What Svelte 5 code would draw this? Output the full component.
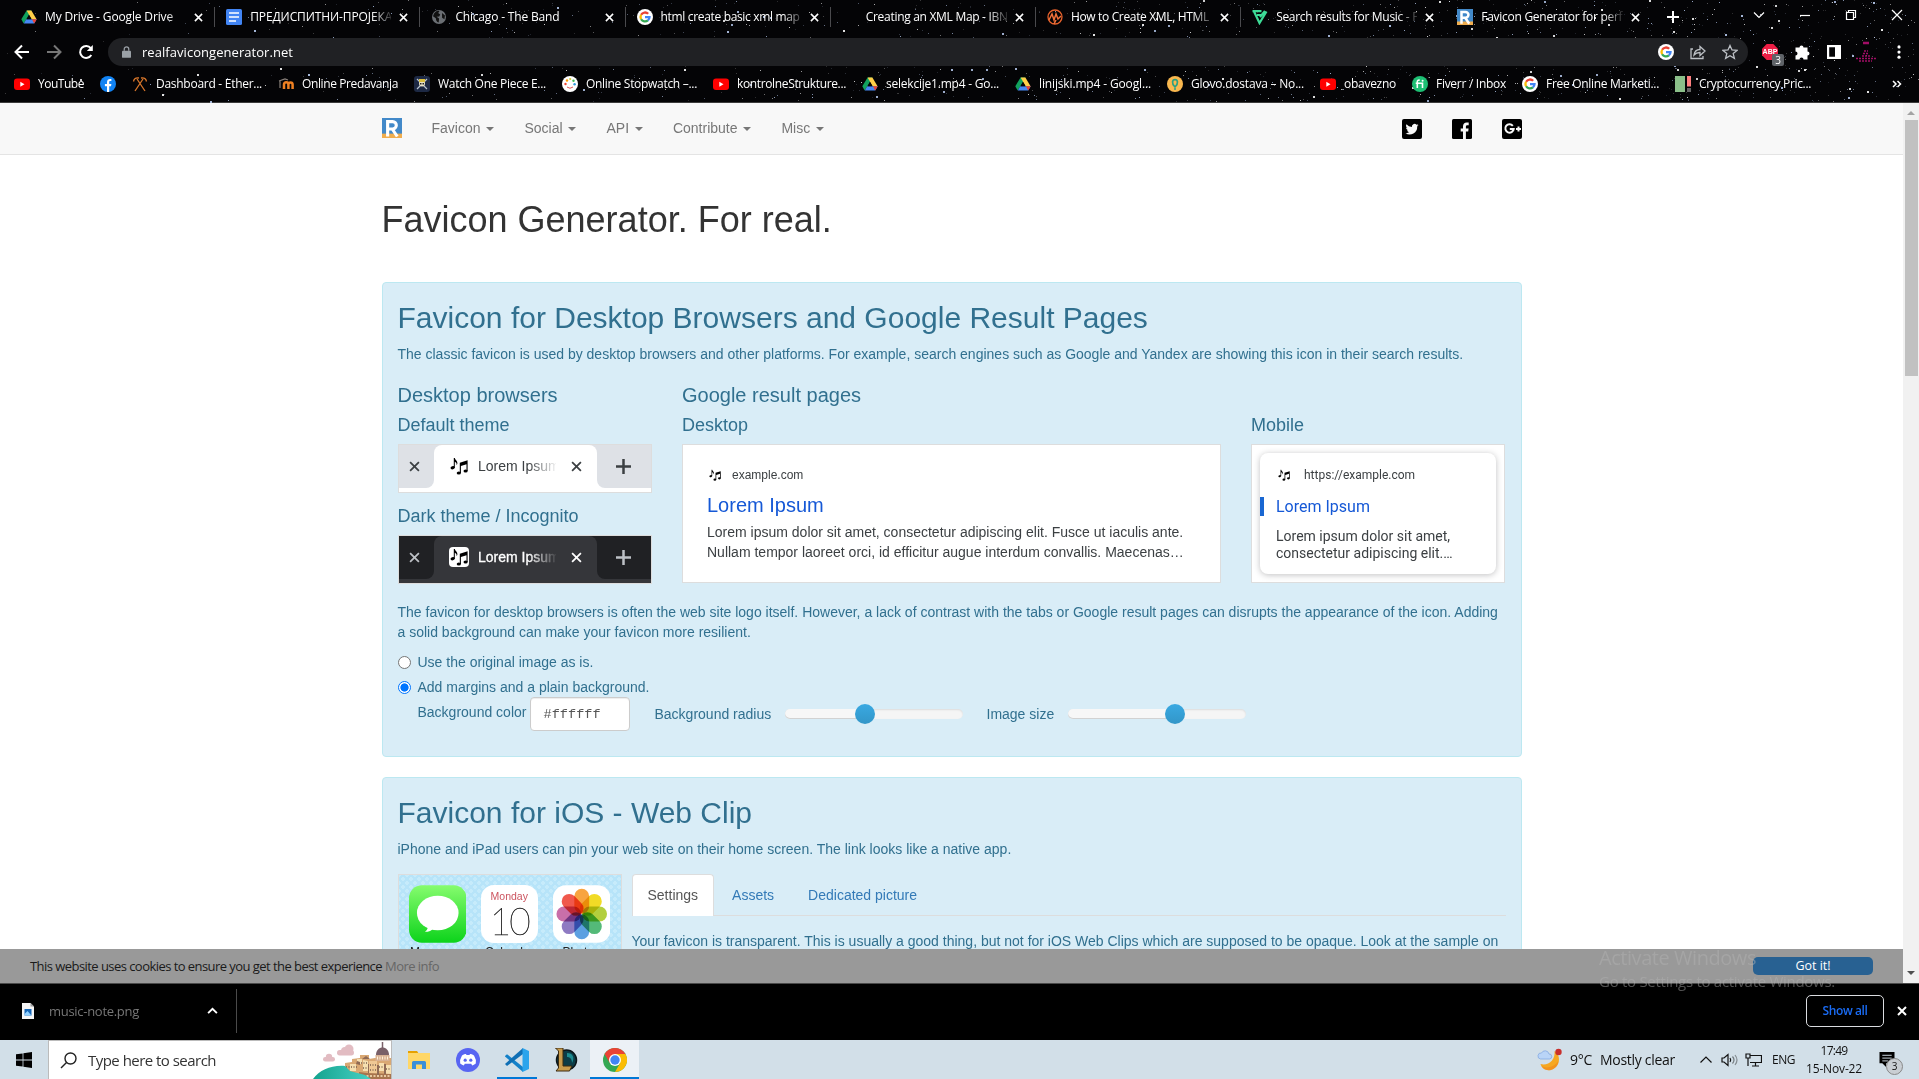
<script>
  const tabs = [
    { icon: 'drive', title: 'My Drive - Google Drive', w: 128 },
    { icon: 'docs', title: 'ПРЕДИСПИТНИ-ПРОЈЕКА', w: 142 },
    { icon: 'globe', title: 'Chicago - The Band', w: 104 },
    { icon: 'google', title: 'html create basic xml map', w: 139 },
    { icon: '', title: 'Creating an XML Map - IBN', w: 142 },
    { icon: 'mark', title: 'How to Create XML, HTML', w: 138 },
    { icon: 'fy', title: 'Search results for Music - F', w: 142 },
    { icon: 'rfg', title: 'Favicon Generator for perf', w: 141 }
  ];
  const bookmarks = [
    ['youtube', 'YouTube', 46],
    ['facebook', '', 0],
    ['hammers', 'Dashboard - Ether...', 106],
    ['moodle', 'Online Predavanja', 96],
    ['pirate', 'Watch One Piece E...', 108],
    ['dots', 'Online Stopwatch –...', 111],
    ['youtube', 'kontrolneStrukture...', 109],
    ['drive', 'selekcije1.mp4 - Go...', 113],
    ['drive', 'linijski.mp4 - Googl...', 112],
    ['glovo', 'Glovo.dostava – No...', 113],
    ['youtube', 'obavezno', 52],
    ['fiverr', 'Fiverr / Inbox', 70],
    ['google', 'Free Online Marketi...', 113],
    ['crypto', 'Cryptocurrency Pric...', 112]
  ];
  const menu = ['Favicon', 'Social', 'API', 'Contribute', 'Misc'];
  const petals = ['#f7941d', '#efd500', '#a6c71a', '#36ae60', '#3f8fdc', '#7a63b8', '#c0559a', '#ee3a2c'];

  // Seeded generator so the star field is the same on every load.
  let seed = 7;
  const rnd = () => (seed = (seed * 16807) % 2147483647) / 2147483647;
  const stars = Array.from({ length: 1500 }, () => {
    const x = Math.floor(1919 * Math.pow(rnd(), 0.6));
    const y = Math.floor(102 * rnd());
    const bright = rnd();
    return { x, y, o: 0.15 + 0.75 * bright * bright, s: bright > 0.93 ? 2 : 1, c: rnd() > 0.5 ? '#b9cdf2' : '#fff' };
  });

  // Spreads a label over a given width through its letter spacing.
  function fit(node, width) {
    node.style.display = 'inline-block';
    node.style.whiteSpace = 'nowrap';
    const natural = node.getBoundingClientRect().width;
    const n = node.textContent.trim().length;
    if (n && width) {
      node.style.letterSpacing = (width - natural) / n + 'px';
      node.style.width = width + 'px';
    }
  }
</script>

{#snippet icon(name)}
  <svg class="ico" viewBox="0 0 16 16">
    {#if name === 'drive'}
      <path fill="#11a15d" d="M5.6 1.5h4.8L5.2 10.4 2.7 14.4 .3 10.2z" />
      <path fill="#ffcf48" d="M5.6 1.5h4.8l5.3 8.9h-4.9z" />
      <path fill="#4688f4" d="M5.2 10.2h10.5l-2.5 4.3H2.8z" />
      <path fill="#ea4335" d="M10.9 10.2h4.8l-2.5 4.3z" />
      <path fill="#050508" d="M8 6.1l2.4 4.1H5.6z" />
    {:else if name === 'docs'}
      <rect width="16" height="16" rx="1.5" fill="#4285f4" />
      <path stroke="#fff" stroke-width="1.6" d="M3 4h10M3 8h10M3 12h7" />
    {:else if name === 'globe'}
      <circle cx="8" cy="8" r="7" fill="#6b6f74" />
      <path fill="#111" d="M3 4.5c2-2.6 4-3 5.5-2.6L7.2 4l2 1.4-1 2-2.6.4 2.5 1.8-.4 3.9C5 12.500 5 10.500 4.800 9.200L2 7.200z M11 4l3 2.400-.6 3.800-2.300-1.400z" />
    {:else if name === 'google'}
      <circle cx="8" cy="8" r="8" fill="#fff" />
      <g fill="none" stroke-width="2.3">
        <path stroke="#ea4335" d="M4.100 5.800A4.500 4.500 0 0 1 11.200 4.800" />
        <path stroke="#fbbc05" d="M4.100 5.800A4.500 4.500 0 0 0 4.100 10.200" />
        <path stroke="#34a853" d="M4.100 10.200A4.500 4.500 0 0 0 10.900 11.400" />
        <path stroke="#4285f4" d="M8 8.200h4.500A4.500 4.500 0 0 1 10.900 11.400" />
      </g>
    {:else if name === 'mark'}
      <circle cx="8" cy="8" r="7" fill="none" stroke="#e8622c" stroke-width="1.300" />
      <path fill="none" stroke="#f0713a" stroke-width="1.500" d="M2 11l3-6 2 6 2-6 2 5 3-3M7 15l2-4" />
    {:else if name === 'fy'}
      <path fill="none" stroke="#3ddc97" stroke-width="2.200" d="M.5 2.200h9M2 2.500l5.500 11.500L14.500 2.500M5 6h5M8 8l5-6" />
    {:else if name === 'rfg'}
      <rect width="16" height="16" fill="#4289c9" /><rect y="12.500" width="16" height="3.500" fill="#f0ad4e" />
      <path fill="none" stroke="#fff" stroke-width="2.500" d="M4.500 14.800V2.900h4a2.900 2.900 0 0 1 0 5.900h-4M8.200 8.800l4 6" />
    {:else if name === 'youtube'}
      <rect y="2.500" width="16" height="11.500" rx="3" fill="#f00" /><path fill="#fff" d="M6.300 5.800v5l4.200-2.500z" />
    {:else if name === 'facebook'}
      <circle cx="8" cy="8" r="8" fill="#1183f3" />
      <path fill="#fff" d="M7 16v-5.700H4.900V8H7V6.200c0-2.200 1.300-3.300 3.200-3.300.7 0 1.200.1 1.200.1v2h-1c-1 0-1.200.6-1.200 1.200V8h2.200l-.4 2.300H9.200V16z" />
    {:else if name === 'hammers'}
      <path fill="none" stroke="#d9772b" stroke-width="1.300" d="M3 15L11 3M13 15L5 3M1.500 5.500C2 3 4 1.500 7 2M14.500 5.500C14 3 12 1.500 9 2" />
    {:else if name === 'moodle'}
      <path fill="none" stroke="#ee8022" stroke-width="2.500" d="M6 13V8.500a2.200 2.200 0 0 1 4.400 0V13M10.400 8.500a2.100 2.100 0 0 1 4.200 0V13" />
      <path stroke="#8a817a" stroke-width="1.200" fill="none" d="M1 5l6-2 3 1M2 5v7" />
    {:else if name === 'pirate'}
      <rect width="16" height="16" rx="3" fill="#1d2944" />
      <path stroke="#b9c3cf" stroke-width="1.200" d="M3 3l10 10M13 3L3 13" /><circle cx="8" cy="7.500" r="3" fill="#e6e2c8" />
      <path fill="#d8bd3d" d="M5 3h6v3H5z" /><path fill="#222" d="M6 7h1.500v1.500H6zM8.500 7H10v1.500H8.500z" />
    {:else if name === 'dots'}
      <circle cx="8" cy="8" r="8" fill="#fff" />
      <circle cx="3.500" cy="8" r="1.200" fill="#e43" /><circle cx="5" cy="4.500" r="1.200" fill="#f90" />
      <circle cx="8.200" cy="3" r="1.100" fill="#cc3" /><circle cx="11.500" cy="4.700" r="1.200" fill="#4b5" />
      <circle cx="12.600" cy="8.300" r="1.200" fill="#39d" /><path fill="none" stroke="#d55" d="M5 11q3 2.500 6 0" />
    {:else if name === 'glovo'}
      <circle cx="8" cy="8" r="8" fill="#f9b84f" />
      <path fill="none" stroke="#2aa083" stroke-width="1.700" d="M8 11C4 7 5.500 3.600 8 3.600S12 7 8 11z" /><circle cx="8" cy="13" r="1" fill="#2aa083" />
    {:else if name === 'fiverr'}
      <circle cx="8" cy="8" r="8" fill="#1dbf73" />
      <path fill="none" stroke="#fff" stroke-width="1.600" d="M5.300 12V6c0-1.500.8-2 2.400-1.800M3.700 7.300h6.800V12" /><circle cx="10.600" cy="4.700" r="1" fill="#fff" />
    {:else if name === 'crypto'}
      <rect width="10" height="16" fill="#8bc08a" /><rect x="12" width="4" height="10.500" fill="#ff8080" /><rect x="12" y="12" width="4" height="4" fill="#666" />
    {/if}
  </svg>
{/snippet}

{#snippet notes()}
  <svg class="notes" viewBox="0 0 18 18">
    <g fill="currentColor">
      <ellipse cx="2.600" cy="10.800" rx="2.100" ry="1.600" transform="rotate(-15 2.600 10.800)" />
      <path d="M3.800 1h1c.2 2 2.600 2.500 2.600 5 0 1-.4 1.600-.9 2.100.5-2-.6-2.900-1.700-3.400V11h-1z" />
      <ellipse cx="8.800" cy="16" rx="2.100" ry="1.600" /><ellipse cx="15.600" cy="14" rx="2.100" ry="1.600" />
      <path d="M9.800 5.700L17.600 3.200V14h-1.100V7.200l-5.600 1.700V16H9.800z" />
    </g>
  </svg>
{/snippet}

{#snippet cross()}
  <svg class="cross" viewBox="0 0 10 10"><path d="M1 1l8 8M9 1L1 9" /></svg>
{/snippet}

<div class="screen">
  <header class="chrome">
    <svg class="stars" viewBox="0 0 1919 103">
      {#each stars as s}<rect x={s.x} y={s.y} width={s.s} height={s.s} fill={s.c} opacity={s.o} />{/each}
    </svg>
    <div class="tabs">
      <div class="strip">
        {#each tabs as t, i}
          <div class="tab" class:last={i > 5}>
            {@render icon(t.icon)}
            <span class="title"><span use:fit={t.w}>{t.title}</span></span>
            {@render cross()}
          </div>
        {/each}
      </div>
      <svg class="plus" viewBox="0 0 12 12"><path d="M6 0v12M0 6h12" /></svg>
      <div class="win">
        <svg viewBox="0 0 12 12"><path d="M1 3.500l5 5 5-5" /></svg>
        <svg viewBox="0 0 12 12"><path d="M1 6.500h10" /></svg>
        <svg viewBox="0 0 12 12"><path d="M1.500 3.500h7v7h-7zM3.500 3.500v-2h7v7h-2" /></svg>
        <svg viewBox="0 0 12 12"><path d="M1 1l10 10M11 1L1 11" /></svg>
      </div>
    </div>
    <div class="toolbar">
      <svg class="nav" viewBox="0 0 16 16"><path d="M15 8H2M8 1.500L1.500 8 8 14.500" /></svg>
      <svg class="nav dim" viewBox="0 0 16 16"><path d="M1 8h13M8 1.500L14.500 8 8 14.500" /></svg>
      <svg class="nav" viewBox="0 0 16 16"><path d="M13.300 11A6 6 0 1 1 12.800 4.200" /><path class="solid" d="M14.800 1v6H8.800z" /></svg>
      <div class="omni">
        <svg class="lock" viewBox="0 0 10 13"><path fill="#9aa0a6" d="M1 5h8a1 1 0 0 1 1 1v6a1 1 0 0 1-1 1H1a1 1 0 0 1-1-1V6a1 1 0 0 1 1-1z" /><path fill="none" stroke="#9aa0a6" stroke-width="1.400" d="M2.500 5V3.200a2.500 2.500 0 0 1 5 0V5" /></svg>
        <span class="url"><span use:fit={151}>realfavicongenerator.net</span></span>
        <span class="omni-icons">
          {@render icon('google')}
          <svg class="line" viewBox="0 0 16 16"><path d="M3 5H1v9.500h12V12M4 11c.5-3.500 2.500-5.500 6-5.500V2.500l5 4.500-5 4.500V8.500C7.500 8.500 5.500 9.300 4 11z" /></svg>
          <svg class="line" viewBox="0 0 16 16"><path d="M8 1.500l2 4.500 5 .4-3.800 3.200 1.200 4.800L8 11.800l-4.400 2.600 1.200-4.800L1 6.400 6 6z" /></svg>
        </span>
      </div>
      <div class="ext">
        <span class="abp">
          <svg class="ico" viewBox="0 0 16 16"><path fill="#ed1e45" d="M4.700 0h6.600L16 4.700v6.600L11.300 16H4.700L0 11.300V4.700z" /></svg>
          <span class="abp-text">ABP</span><span class="badge">3</span>
        </span>
        <svg class="ico" viewBox="0 0 16 16"><path fill="#fff" d="M1.500 3.500h4a2 2 0 0 1 4 0h4v4a2 2 0 0 1 0 4v4h-4a2 2 0 0 0-4 0h-4v-4a2 2 0 0 0 0-4z" /></svg>
        <svg class="ico" viewBox="0 0 16 16"><path fill="#fff" fill-rule="evenodd" d="M1 1h14v14H1zM3.200 3.200v9.600h5.800V3.200z" /></svg>
        <svg class="avatar" viewBox="0 0 20 22"><g stroke="#c9107e" stroke-width="1.500" opacity=".8"><path stroke-width="2.500" d="M7 2h6" /><path stroke-dasharray="2 1" d="M8 10h4M7 12.500h6M6 15h8M0 17.500h20M3 20h13" /></g></svg>
        <svg class="more" viewBox="0 0 4 16"><circle cx="2" cy="2" r="1.700" /><circle cx="2" cy="7.500" r="1.700" /><circle cx="2" cy="13" r="1.700" /></svg>
      </div>
    </div>
    <div class="bookmarks">
      {#each bookmarks as [ic, label, w]}
        <div class="bm">{@render icon(ic)}{#if label}<span use:fit={w}>{label}</span>{/if}</div>
      {/each}
      <svg class="chev" viewBox="0 0 10 8"><path d="M1 1l3 3-3 3M5.500 1l3 3-3 3" /></svg>
    </div>
  </header>

  <div class="view">
    <div class="page">
      <nav class="navbar">
        <div class="container bar">
          <span class="logo">{@render icon('rfg')}</span>
          <div class="menu">
            {#each menu as m}<a href="#top">{m} <i class="caret"></i></a>{/each}
          </div>
          <div class="social">
            <svg viewBox="0 0 20 20"><rect width="20" height="20" rx="2" /><path fill="#f8f8f8" d="M16.500 6a5 5 0 0 1-1.500.4A2.700 2.700 0 0 0 16.200 5a5 5 0 0 1-1.700.7 2.700 2.700 0 0 0-4.600 2.400A7.500 7.500 0 0 1 4.500 5.300a2.700 2.700 0 0 0 .8 3.600 2.600 2.600 0 0 1-1.200-.4c0 1.300.9 2.400 2.100 2.700a2.700 2.700 0 0 1-1.200 0c.3 1.100 1.300 1.900 2.500 1.900A5.400 5.400 0 0 1 3.500 14.200 7.600 7.600 0 0 0 15.200 7.400 5.400 5.400 0 0 0 16.500 6z" /></svg>
            <svg viewBox="0 0 20 20"><rect width="20" height="20" rx="1.500" /><path fill="#f8f8f8" d="M11 20v-7.500H8.700v-3H11V7.300C11 4.900 12.500 3.500 14.700 3.500h2v2.800h-1.300c-1.200 0-1.500.6-1.500 1.500v1.700h2.700l-.4 3h-2.300V20z" /></svg>
            <svg viewBox="0 0 20 20"><rect width="20" height="20" rx="2" /><path fill="none" stroke="#f8f8f8" stroke-width="2" d="M10.800 6.800A4.200 4.200 0 1 0 11.700 10H7.800M14 10h5M16.500 7.500v5" /></svg>
          </div>
        </div>
      </nav>

      <main class="container">
        <h1>Favicon Generator. For real.</h1>

        <section class="panel first">
          <h2>Favicon for Desktop Browsers and Google Result Pages</h2>
          <p>The classic favicon is used by desktop browsers and other platforms. For example, search engines such as Google and Yandex are showing this icon in their search results.</p>
          <div class="cols">
            <div>
              <h3>Desktop browsers</h3>
              <h4>Default theme</h4>
              <div class="preview light">
                <div class="edge left">{@render cross()}</div>
                <div class="ptab">{@render notes()}<span>Lorem Ipsum</span>{@render cross()}</div>
                <div class="edge right"><svg class="plus" viewBox="0 0 12 12"><path d="M6 0v12M0 6h12" /></svg></div>
              </div>
              <h4 class="second">Dark theme / Incognito</h4>
              <div class="preview dark">
                <div class="edge left">{@render cross()}</div>
                <div class="ptab">{@render notes()}<span>Lorem Ipsum</span>{@render cross()}</div>
                <div class="edge right"><svg class="plus" viewBox="0 0 12 12"><path d="M6 0v12M0 6h12" /></svg></div>
              </div>
            </div>
            <div>
              <h3>Google result pages</h3>
              <h4>Desktop</h4>
              <div class="result">
                <div class="site">{@render notes()}example.com</div>
                <div class="rtitle">Lorem Ipsum</div>
                <div class="rtext">Lorem ipsum dolor sit amet, consectetur adipiscing elit. Fusce ut iaculis ante.<br />Nullam tempor laoreet orci, id efficitur augue interdum convallis. Maecenas…</div>
              </div>
            </div>
            <div>
              <h3>&nbsp;</h3>
              <h4>Mobile</h4>
              <div class="result mobile">
                <div class="card">
                  <div class="site">{@render notes()}https://example.com</div>
                  <div class="rtitle">Lorem Ipsum</div>
                  <div class="rtext">Lorem ipsum dolor sit amet,<br />consectetur adipiscing elit.…</div>
                </div>
              </div>
            </div>
          </div>
          <p>The favicon for desktop browsers is often the web site logo itself. However, a lack of contrast with the tabs or Google result pages can disrupts the appearance of the icon. Adding a solid background can make your favicon more resilient.</p>
          <div class="radio"><i></i>Use the original image as is.</div>
          <div class="radio on"><i></i>Add margins and a plain background.</div>
          <div class="options">
            <span class="lbl">Background color</span><span class="field">#ffffff</span>
            <span class="radius">Background radius</span><span class="slider"><b class="fill a"></b><b class="knob"></b></span>
            <span class="size">Image size</span><span class="slider"><b class="fill b"></b><b class="knob"></b></span>
          </div>
        </section>

        <section class="panel ios">
          <h2>Favicon for iOS - Web Clip</h2>
          <p>iPhone and iPad users can pin your web site on their home screen. The link looks like a native app.</p>
          <div class="clip">
            <div class="phone">
              <div class="app">
                <svg viewBox="0 0 58 58">
                  <defs><linearGradient id="msg" x2="0" y2="1"><stop offset="0" stop-color="#86fc6e" /><stop offset="1" stop-color="#0cd31b" /></linearGradient></defs>
                  <rect width="58" height="58" rx="13" fill="url(#msg)" />
                  <ellipse cx="29" cy="28" rx="21" ry="17.500" fill="#fff" /><path fill="#fff" d="M19 41c0 3-1 4.500-3 6 4 0 7-1.500 9-4z" />
                </svg>
                <span>Messages</span>
              </div>
              <div class="app">
                <div class="cal"><small>Monday</small><b>10</b></div>
                <span>Calendar</span>
              </div>
              <div class="app">
                <svg viewBox="0 0 58 58">
                  <rect width="58" height="58" rx="13" fill="#fff" />
                  <g class="petals">
                    {#each petals as c, i}<rect x="21.500" y="3.500" width="15" height="25" rx="7.500" fill={c} opacity=".85" transform={`rotate(${i * 45} 29 29)`} />{/each}
                  </g>
                </svg>
                <span>Photos</span>
              </div>
            </div>
            <div class="settings">
              <div class="navtabs"><span class="active">Settings</span><span>Assets</span><span>Dedicated picture</span></div>
              <p>Your favicon is transparent. This is usually a good thing, but not for iOS Web Clips which are supposed to be opaque. Look at the sample on</p>
            </div>
          </div>
        </section>
      </main>
    </div>
    <div class="scroll"><i class="up"></i><b></b><i class="down"></i></div>
    <div class="cookie">
      <span use:fit={352}>This website uses cookies to ensure you get the best experience</span>
      <a href="#info" use:fit={54}>More info</a>
      <button>Got it!</button>
    </div>
  </div>

  <div class="downloads">
    <svg class="file" viewBox="0 0 12 16"><path fill="#f5f5f5" d="M0 0h8.500L12 3.500V16H0z" /><path fill="#999" d="M8.500 0v3.500H12z" /><rect x="2.500" y="6" width="7" height="6.500" fill="#1567b8" /><path fill="#8fd0ff" d="M2.500 11l3-3 4 4.500h-7z" /></svg>
    <span class="fname"><span use:fit={90}>music-note.png</span></span>
    <svg class="up" viewBox="0 0 10 7"><path d="M1 5.500l4-4 4 4" /></svg>
    <i class="sep"></i>
    <button><span use:fit={45}>Show all</span></button>
    {@render cross()}
  </div>

  <footer class="taskbar">
    <div class="start"><svg viewBox="0 0 16 16"><path d="M0 2.300L6.600 1.400v6.200H0zM7.400 1.300L16 0v7.600H7.400zM0 8.400h6.600v6.200L0 13.700zM7.400 8.400H16V16l-8.600-1.200z" /></svg></div>
    <div class="search">
      <svg class="lens" viewBox="0 0 17 17"><circle cx="10.500" cy="6.500" r="5.500" /><path d="M6.500 10.500L1 16" /></svg>
      <span use:fit={128}>Type here to search</span>
      <svg class="city" viewBox="0 0 78 38">
        <defs><linearGradient id="sea" x2="1"><stop offset="0" stop-color="#14a38e" /><stop offset="1" stop-color="#45d0c4" /></linearGradient></defs>
        <g fill="#e2bcc2"><circle cx="32" cy="10" r="4" /><circle cx="36" cy="8" r="4.500" /><rect x="24" y="9" width="17" height="5.500" rx="2.700" /><circle cx="16" cy="16" r="3.200" /><rect x="10" y="16" width="12" height="4.500" rx="2.200" /></g>
        <path fill="#d9a873" d="M32 31v-9l7-1v-3l8-1v-3h9v4l6-1h16v21H50z" />
        <path fill="#f6dfb0" d="M37 23h6v7h-6zM44 18h5v5h-5zM50 19l5 1v10h-5zM66 22h5v8h-5zM73 24h5v9h-5z" />
        <path fill="#efc894" d="M56 20h8v14h-8z" />
        <path fill="#a8744d" d="M46 31l8 1 24 1v5H46z" />
        <path fill="#8f6a55" d="M43 23l1-3 3 1v3zM49 18l4-3 4 3zM64 24h2v10h-2zM71 23h2v10h-2zM55 23h1v9h-1z" />
        <path stroke="#7b604f" stroke-dasharray="1 1.500" stroke-width="1.500" d="M33 26h12M48 22h7M57 24h6M57 29h6M66 26h5M73 28h5M50 27h5" />
        <path stroke="#fbe6be" stroke-dasharray="2 1.500" stroke-width="1.500" d="M50 35h28" />
        <path fill="url(#sea)" d="M0 38c7-9 18-14 32-13l5 5 15 4 6 4z" />
        <path fill="#796068" d="M63 14c0-10 13-10 13 0z" /><path fill="#d8b193" d="M62.500 14h14v6h-14z" />
        <path stroke="#796068" stroke-width="1.500" d="M69.500 1v6" /><path stroke="#fff0d6" d="M64 17h11" stroke-dasharray="1 1.500" stroke-width="3" />
      </svg>
    </div>
    <div class="task"><svg viewBox="0 0 24 24"><path fill="#e6a100" d="M1 3h9l2 3H1z" /><path fill="#ffd767" d="M1 5h22v16H1z" /><path fill="#3a8fd8" d="M5 21v-6.500q0-1.500 1.500-1.500h11q1.500 0 1.500 1.500V21h-4v-4.500H9V21z" /></svg></div>
    <div class="task"><svg viewBox="0 0 24 24"><circle cx="12" cy="12" r="12" fill="#5865f2" /><path fill="#fff" d="M6 7.500q2.500-1.500 4-1.400l.5.900h3l.5-.9q1.500-.1 4 1.400Q20.500 11.500 19.800 15.600q-2 1.500-3.600 1.800l-1-1.600H8.800l-1 1.600Q6.200 17.100 4.200 15.600 3.500 11.500 6 7.500z" /><circle cx="9.200" cy="12.200" r="1.600" fill="#5865f2" /><circle cx="14.800" cy="12.200" r="1.600" fill="#5865f2" /></svg></div>
    <div class="task open"><svg viewBox="0 0 24 24"><path fill="#1481c9" d="M0 8l2-1.800L18 19v5L0 8.500z" /><path fill="#0f6fb5" d="M0 16L18 0v6L2 18z" /><path fill="#2ba4ec" d="M17.500 0L24 3v18l-6.500 3z" /></svg></div>
    <div class="task"><svg viewBox="0 0 24 24"><circle cx="12.500" cy="12" r="10" fill="#0c3c46" stroke="#0b1418" stroke-width="1.500" /><path fill="#1d8b90" d="M13 5c6 0 8 5 5 10 0-4-2-6-5-6z" /><path fill="#c89b4b" stroke="#3a2a10" stroke-width="1" d="M1.500 0H9v18h9l-2.500 5H2l2.500-3V3z" /></svg></div>
    <div class="task open current"><svg viewBox="0 0 24 24"><circle cx="12" cy="12" r="12" fill="#34a853" /><path fill="#ea4335" d="M1.600 6A12 12 0 0 1 22.400 6H12l-5.200 9z" /><path fill="#fbbc04" d="M22.400 6A12 12 0 0 1 12 24l5.200-9L12 6z" /><circle cx="12" cy="12" r="6" fill="#fff" /><circle cx="12" cy="12" r="4.700" fill="#4285f4" /></svg></div>
    <div class="tray">
      <svg class="weather" viewBox="0 0 24 24"><path fill="#f6a821" d="M17 3c7 4 6 17-4 19-5 1-9-2-10-6 8 2 15-4 14-13z" /><path fill="#ef7d1a" opacity=".5" d="M4 18c5 3 13 1 17-5-1 9-12 13-17 5z" /><g fill="#b9d4f7" stroke="#7da3e0" stroke-width=".7"><path d="M3 11a3 3 0 0 1 1-6 4 4 0 0 1 7.500 1A2.500 2.500 0 0 1 12 11z" /></g><circle cx="21" cy="4" r="3.200" fill="#c9302c" /></svg>
      <span class="temp"><span use:fit={22}>9°C</span></span>
      <span class="cond"><span use:fit={75}>Mostly clear</span></span>
      <svg class="t up2" viewBox="0 0 12 8"><path d="M.500 6.500L6 1l5.500 5.500" /></svg>
      <svg class="t spk" viewBox="0 0 17 14"><path d="M1 5h2l4-3.500v11L3 9H1z" /><path d="M9 5q1.500 2 0 4" /><path opacity=".5" d="M11.500 3.500q3 3.500 0 7" /><path opacity=".4" d="M14 2q4 5 0 10" /></svg>
      <svg class="t net" viewBox="0 0 17 14"><path d="M5 2.500h11.500v7H5M10.500 9.500v3M7 13h7M1 1h4v4H1zM3 5v8" /></svg>
      <span class="eng"><span use:fit={23}>ENG</span></span>
      <span class="clock"><span use:fit={27}>17:49</span><span use:fit={56}>15-Nov-22</span></span>
      <span class="notif"><svg viewBox="0 0 16 16"><path d="M0 0h16v12H7v4l-4-4H0z" /><path stroke="#d2dee8" d="M3 3.500h10M3 6.500h10M3 9.500h6" /></svg><b>3</b></span>
    </div>
  </footer>

  <div class="watermark"><span use:fit={157}>Activate Windows</span><small use:fit={236}>Go to Settings to activate Windows.</small></div>
</div>

<style>
  :global(body) { margin: 0; overflow: hidden; }
  * { box-sizing: border-box; }
  svg { display: block; flex: none; }
  .screen { width: 1919px; height: 1079px; position: relative; overflow: hidden; display: flex; flex-direction: column; background: #fff; font-family: 'Open Sans', 'Noto Sans', sans-serif; }
  .ico { width: 16px; height: 16px; }
  .cross { width: 9px; height: 9px; fill: none; stroke: currentColor; stroke-width: 1.700; }
  .plus { width: 12px; height: 12px; fill: none; stroke: currentColor; stroke-width: 2; }

  .chrome { height: 103px; background: #040406; border-bottom: 1px solid #3c3c3c; position: relative; color: #fff; font-size: 12px; flex: none; }
  .stars { position: absolute; inset: 0; width: 1919px; height: 103px; }
  .tabs, .toolbar, .bookmarks { position: relative; display: flex; align-items: center; }
  .tabs { height: 34px; padding-left: 10px; }
  .strip { display: grid; grid-template-columns: repeat(8, 205.200px); }
  .tab { height: 20px; display: flex; align-items: center; padding-left: 11px; padding-right: 11px; border-right: 1px solid #4a4a4d; }
  .tab.last { border-color: transparent; }
  .title { margin-left: 8px; width: 142px; margin-right: 8px; overflow: hidden; line-height: 18px; height: 18px; mask-image: linear-gradient(90deg, #000 122px, transparent 145px); }
  .tabs > .plus { margin-left: 15px; }
  .win { display: flex; gap: 34px; margin-left: 74px; margin-top: -5px; }
  .win svg { width: 12px; height: 12px; fill: none; stroke: #fff; stroke-width: 1.200; }
  .toolbar { height: 36px; padding-left: 14px; }
  .nav { width: 16px; height: 16px; fill: none; stroke: #fff; stroke-width: 2; margin-right: 16px; }
  .nav.dim { stroke: #777; }
  .nav .solid { fill: #fff; stroke: none; }
  .omni { width: 1640px; height: 28px; margin-left: -2px; border-radius: 14px; background: #202124; display: flex; align-items: center; padding-left: 14px; margin-top: 0; }
  .lock { width: 9px; height: 12px; margin-right: 11px; }
  .url { width: 1516px; font-size: 13px; }
  .omni-icons { display: flex; gap: 16px; }
  .line { width: 16px; height: 16px; fill: none; stroke: #bdc1c6; stroke-width: 1.300; }
  .ext { display: flex; align-items: center; margin-left: 14px; gap: 16px; }
  .abp { position: relative; }
  .abp-text { position: absolute; left: 0; top: 3px; width: 16px; text-align: center; font: bold 7px/10px 'Liberation Sans', sans-serif; }
  .badge { position: absolute; left: 10px; top: 10px; width: 12px; height: 12px; border-radius: 2px; background: #5f6368; font-size: 10px; line-height: 12px; text-align: center; }
  .avatar { width: 20px; height: 22px; }
  .ext .avatar { margin: 0 5px 0 -2px; }
  .more { width: 4px; height: 15px; fill: #fff; }
  .bookmarks { height: 28px; padding-left: 14px; gap: 16px; }
  .bm { display: flex; align-items: center; gap: 8px; line-height: 18px; }
  .chev { width: 10px; height: 8px; fill: none; stroke: #fff; stroke-width: 1.500; margin-left: 65px; }

  .view { height: 880px; position: relative; display: flex; overflow: hidden; flex: none; }
  .page { width: 1903px; height: 880px; overflow: hidden; font: 14px/20px 'Liberation Sans', Arial, sans-serif; }
  .container { width: 1140px; margin-left: 381.500px; }
  .navbar { height: 52px; background: #f8f8f8; border-bottom: 1px solid #e4e4e4; }
  .bar { display: flex; align-items: center; height: 50px; }
  .logo .ico { width: 20px; height: 20px; }
  .menu { display: flex; flex: 1; margin-left: 30px; gap: 30px; }
  .menu a { color: #777; text-decoration: none; }
  .caret { display: inline-block; width: 0; height: 0; vertical-align: middle; margin-left: 2px; border-top: 4px solid; border-left: 4px solid transparent; border-right: 4px solid transparent; }
  .social { display: flex; gap: 30px; margin-top: 2px; }
  .social svg { width: 20px; height: 20px; }
  h1, h2, h3, h4, p { margin: 0; font-weight: 500; }
  h1 { font-size: 36px; line-height: 40px; margin-top: 45px; font-weight: 400; color: #333; }
  .panel { border: 1px solid #bce8f1; border-radius: 4px; background: #d9edf7; color: #31708f; padding: 15px; }
  .first { margin-top: 42px; height: 475px; }
  h2 { font-size: 30px; line-height: 33px; font-weight: 400; margin: 3px 0 10px; }
  h3 { font-size: 20px; line-height: 22px; font-weight: 400; margin-bottom: 9px; }
  h4 { font-size: 18px; line-height: 20px; font-weight: 400; margin-bottom: 9px; }
  .cols { display: grid; grid-template-columns: 254.500px 539px 253.500px; column-gap: 30px; height: 201px; margin-top: 20px; margin-bottom: 17px; }
  .second { margin-top: 13px; }
  .preview { border: 1px solid #ddd; height: 49px; width: 254px; display: grid; grid-template-columns: 35px 163px 1fr; background-clip: padding-box; color: #3c4043; }
  .edge { height: 43px; background: #dee1e6; display: flex; align-items: center; justify-content: center; padding-bottom: 1px; }
  .edge.left { border-bottom-right-radius: 8px; padding-right: 3px; }
  .edge.right { border-bottom-left-radius: 8px; padding-right: 1px; }
  .edge .plus { width: 15px; height: 15px; }
  .edge .cross, .ptab .cross { width: 11px; height: 11px; stroke-width: 1.600; }
  .ptab { height: 43px; background: #fff; border-radius: 8px 8px 0 0; display: flex; align-items: center; padding: 0 0 1px 16px; }
  .ptab span { width: 78px; overflow: hidden; white-space: nowrap; margin: 0 14.500px 0 10.500px; mask-image: linear-gradient(90deg, #000 50px, transparent 80px); }
  .notes { width: 18px; height: 18px; color: #000; }
  .preview.light { background: linear-gradient(#dee1e6 12px, #fff 12px); }
  .preview.dark { background: linear-gradient(#202124 12px, #35363a 12px); color: #fff; }
  .dark .edge { background: #202124; color: #bdc1c6; }
  .dark .ptab { background: #35363a; padding-left: 15px; -webkit-text-stroke: .3px #fff; }
  .dark .notes { background: #fff; border-radius: 4px; padding: 1px; width: 20px; height: 20px; }
  .dark .ptab span { margin-left: 9.500px; }
  .result { border: 1px solid #ddd; background: #fff; height: 139px; padding: 20px 24px; color: #3c4043; }
  .site { display: flex; align-items: center; font-size: 12px; line-height: 20px; height: 20px; gap: 11px; padding-left: 2px; }
  .site .notes { width: 12px; height: 12px; }
  .rtitle { color: #1558d6; font-size: 20px; line-height: 26px; margin: 7px 0 4px; }
  .rtext { white-space: nowrap; }
  .mobile { padding: 8px; font-family: Roboto, sans-serif; }
  .card { height: 121px; width: 236px; border-radius: 8px; box-shadow: 0 1px 6px rgba(32, 33, 36, .28); padding: 12px 16px; color: #3c4043; }
  .card .site { gap: 14px; }
  .card .rtitle { font-size: 16px; line-height: 19px; margin: 12px 0 12px -16px; padding-left: 12px; border-left: 4px solid #1967d2; }
  .card .rtext { line-height: 17.400px; }
  .radio { display: flex; align-items: center; gap: 7px; height: 20px; margin-top: 10px; }
  .radio + .radio { margin-top: 5px; }
  .radio i { width: 13px; height: 13px; border: 1px solid #767676; border-radius: 50%; background: #fff; }
  .radio.on i { border: 1px solid #0075ff; background: radial-gradient(#0075ff 3.700px, #fff 4.500px); }
  .options { display: flex; align-items: center; height: 34px; padding-left: 20px; white-space: nowrap; }
  .lbl { width: 109px; margin-top: -4px; }
  .field { width: 100px; height: 34px; margin-left: 3px; border: 1px solid #ccc; border-radius: 4px; background: #fff; box-shadow: inset 0 1px 1px rgba(0, 0, 0, .075); color: #555; font: 13.600px/33px 'Liberation Mono', monospace; padding-left: 13px; }
  .radius { width: 116px; margin-left: 25px; margin-top: -1px; }
  .size { width: 69px; margin-left: 24px; margin-top: -1px; }
  .slider { width: 178px; height: 10px; margin-left: 14px; border-radius: 5px; background: #f5f5f5; box-shadow: inset 0 1px 2px rgba(0, 0, 0, .1); display: flex; align-items: center; }
  .size + .slider { margin-left: 12px; }
  .fill { height: 10px; border-radius: 5px; background: #f7f7f7; box-shadow: inset 0 -1px 0 rgba(0, 0, 0, .15); margin-right: -10px; flex: none; }
  .fill.a { width: 80px; }
  .fill.b { width: 107px; }
  .knob { width: 20px; height: 20px; border-radius: 50%; background: linear-gradient(#3aa9e2, #3296c8); flex: none; }
  .ios { margin-top: 20px; height: 300px; }
  .clip { display: flex; margin-top: 15px; gap: 10px; }
  .phone { width: 224px; height: 240px; border: 1px solid #ddd; background-color: #b7e4f9; background-image: radial-gradient(#c6ebfb 1.800px, transparent 2px), radial-gradient(#c6ebfb 1.800px, transparent 2px); background-size: 8px 8px; background-position: 0 0, 4px 4px; display: flex; gap: 14.500px; padding: 10px 0 0 10px; }
  .app { width: 57.500px; display: flex; flex-direction: column; align-items: center; }
  .app > svg { width: 57.500px; height: 58px; }
  .app span { font-size: 12px; line-height: 14px; color: #222; margin-top: 2px; }
  .petals rect { mix-blend-mode: multiply; }
  .cal { width: 57.500px; height: 58px; border-radius: 13px; background: #fff; text-align: center; color: #222; display: flex; flex-direction: column; align-items: center; overflow: hidden; }
  .cal small { font-size: 10.500px; line-height: 12px; color: #cc5560; margin-top: 5px; }
  .cal b { font: 100 37px/37px Lato, sans-serif; -webkit-text-stroke: .4px #222; letter-spacing: -2px; }
  .settings { flex: 1; }
  .navtabs { height: 42px; display: flex; gap: 2px; border-bottom: 1px solid #ddd; color: #337ab7; }
  .navtabs span { padding: 11px 16px; height: 42px; }
  .navtabs .active { background: #fff; border: 1px solid #ddd; border-bottom: 0; border-radius: 4px 4px 0 0; color: #555; padding: 10px 15px; }
  .settings p { margin-top: 15px; white-space: nowrap; }
  .scroll { width: 16px; height: 880px; background: #f1f1f1; display: flex; flex-direction: column; align-items: center; }
  .scroll b { width: 13px; height: 256px; background: #c1c1c1; margin-top: 5px; }
  .scroll i { border: 4px solid transparent; }
  .scroll .up { border-bottom-color: #a3a3a3; margin-top: 4px; }
  .scroll .down { border-top-color: #505050; margin-top: auto; margin-bottom: 4px; }
  .cookie { position: absolute; left: 0; bottom: 0; width: 1903px; height: 34px; background: #999; display: flex; align-items: center; padding: 0 30px 1px; font-size: 13px; color: #1a1a1a; gap: 3px; }
  .cookie span { line-height: 18px; }
  .cookie a { color: #666; text-decoration: none; }
  .cookie button { margin-left: auto; width: 120px; height: 18px; border: 0; border-radius: 5px; background: #286192; color: #fff; font: 12.500px/17px 'Open Sans', sans-serif; padding: 0; }

  .downloads { height: 57px; flex: none; background: #000; border-top: 1px solid #4a4a4a; display: flex; align-items: center; padding: 0 0 2px 22px; color: #fff; }
  .file { width: 12px; height: 16px; }
  .fname { width: 90px; margin-left: 15px; color: #777; font-size: 13px; }
  .downloads .up { width: 11px; height: 8px; margin-left: 68px; fill: none; stroke: #fff; stroke-width: 1.700; }
  .sep { width: 1px; height: 44px; margin-left: 17.500px; background: #4a4a4a; }
  .downloads button { width: 78px; height: 32px; margin-left: auto; background: #000; border: 1px solid #dadce0; border-radius: 5px; color: #1a6cf5; font: 600 12px/18px 'Open Sans', sans-serif; padding: 0; }
  .downloads > .cross { margin: 0 12px 0 13px; width: 10px; height: 10px; stroke-width: 2; }

  .taskbar { height: 39px; flex: none; background: #d2dfe8; display: flex; align-items: stretch; color: #111; }
  .start { width: 48px; display: flex; align-items: center; justify-content: center; }
  .start svg { width: 16px; height: 16px; }
  .search { width: 344px; background: #fff; border: 1px solid #bbb; border-bottom: 0; display: flex; align-items: center; padding-left: 11px; font-size: 15px; color: #333; }
  .lens { width: 17px; height: 17px; fill: none; stroke: #222; stroke-width: 1.400; margin-right: 11px; }
  .city { width: 78px; height: 38px; margin-left: auto; }
  .task { width: 49px; display: flex; align-items: center; justify-content: center; border-bottom: 2px solid transparent; background-clip: padding-box; padding-top: 3px; }
  .task:nth-child(3) { width: 51px; padding-left: 2px; }
  .task svg { width: 24px; height: 24px; }
  .task.open { border-bottom: 2px solid #0078d7; margin: 0 4.500px; width: 40px; }
  .task.current { background: #ecf1f6; width: 49px; margin: 0; }
  .tray { margin-left: auto; width: 382px; display: flex; align-items: center; font-size: 14px; }
  .weather { width: 25px; height: 24px; }
  .temp { margin-left: 8px; width: 22px; }
  .cond { margin-left: 8px; width: 75px; }
  .t { fill: none; stroke: #111; stroke-width: 1.200; }
  .up2 { width: 12px; height: 8px; margin-left: 25px; }
  .spk { width: 17px; height: 14px; margin-left: 9px; }
  .net { width: 17px; height: 14px; margin-left: 7px; }
  .eng { margin-left: 10px; font-size: 12px; width: 23px; }
  .clock { display: flex; flex-direction: column; align-items: center; width: 56px; margin-left: 11px; font-size: 12px; line-height: 18px; }
  .notif { position: relative; margin-left: 17px; }
  .notif svg { width: 16px; height: 15px; }
  .notif b { position: absolute; left: 7px; top: 6px; width: 17px; height: 17px; border-radius: 50%; background: #c9ced3; border: 1px solid #888; font: 10px/15px 'Open Sans', sans-serif; text-align: center; }
  .watermark { position: absolute; left: 1599px; top: 944px; width: 240px; color: rgba(180, 180, 180, .45); font-size: 20px; line-height: 28px; display: flex; flex-direction: column; align-items: flex-start; }
  .watermark small { font-size: 15px; line-height: 18px; }
</style>
